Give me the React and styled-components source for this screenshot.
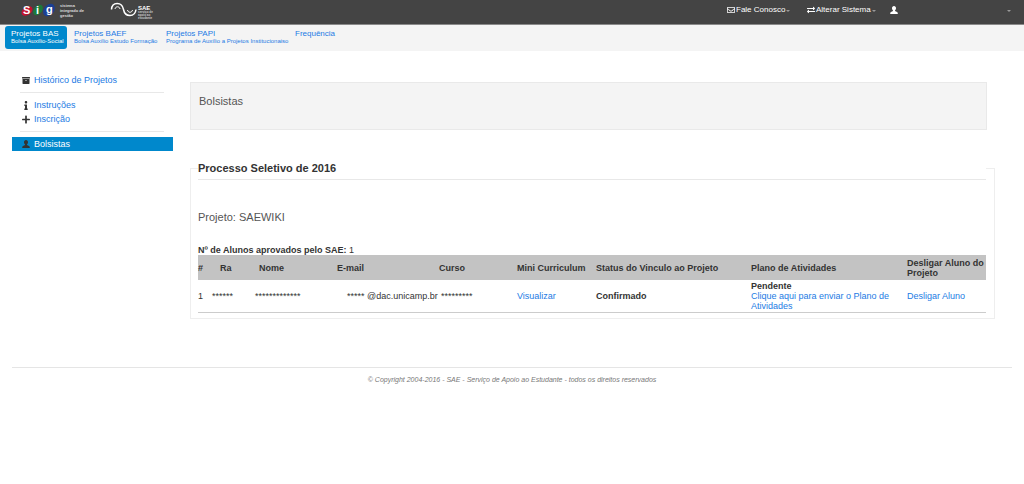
import React from 'react'
import styled, { createGlobalStyle } from 'styled-components'
import { FaArchive, FaInfo, FaPlus, FaRegEnvelope, FaExchangeAlt } from 'react-icons/fa'

const GlobalStyle = createGlobalStyle`
  * {
    box-sizing: border-box;
  }
  body {
    margin: 0;
    background: #fff;
    color: #333;
    font-family: "Liberation Sans", Arial, sans-serif;
    font-size: 9px;
    line-height: 10px;
  }
  a {
    color: #1c7be4;
    text-decoration: none;
  }
`

const TopBar = styled.header`
  display: flex;
  align-items: flex-start;
  justify-content: space-between;
  height: 25px;
  padding: 0 13px 0 20px;
  background: #444;
  border-bottom: 1px solid #8a8a8a;
`

const Logos = styled.div`
  display: flex;
  gap: 20px;
`

const TopMenu = styled.nav`
  display: flex;
  align-items: center;
  height: 20px;
`

const MenuButton = styled.button`
  display: flex;
  align-items: center;
  gap: 1px;
  width: ${(p) => p.$width};
  padding: 0;
  border: 0;
  background: none;
  color: #fff;
  font: inherit;
  font-size: 8px;
  white-space: nowrap;
`

const Caret = styled.span`
  margin-top: 2px;
  border-top: 2px solid #999;
  border-left: 2px solid transparent;
  border-right: 2px solid transparent;
`

const Spacer = styled.span`
  flex: 1;
`

const TabBar = styled.nav`
  display: flex;
  align-items: flex-start;
  height: 26px;
  padding: 1px 5px;
  background: #f4f4f4;
`

const Tab = styled.a`
  width: ${(p) => p.$width};
  height: 23px;
  margin-right: 1px;
  padding: 3px 0 0 6px;
  border-radius: 3px;
  background: ${(p) => (p.$active ? '#0088cc' : 'none')};
  color: ${(p) => (p.$active ? '#fff' : '#1c7be4')};
  font-size: 8px;
  white-space: nowrap;
`

const TabNote = styled.small`
  display: block;
  font-size: 6px;
  line-height: 5px;
`

const Page = styled.div`
  display: grid;
  grid-template-columns: 161px minmax(0, 1fr);
  column-gap: 17px;
  padding: 22px 29px 0 12px;
`

const SideMenu = styled.nav`
  display: flex;
  flex-direction: column;
`

const SideLink = styled.a`
  display: flex;
  align-items: center;
  gap: 4px;
  height: 14px;
  padding-left: 10px;
  background: ${(p) => (p.$active ? '#0088cc' : 'none')};
  color: ${(p) => (p.$active ? '#fff' : '#1c7be4')};

  svg {
    width: 8px;
    color: #333;
  }
`

const SideRule = styled.hr`
  width: 144px;
  margin: 5px 8px;
  border: 0;
  border-top: 1px solid #e8e8e8;
`

const Heading = styled.div`
  height: 48px;
  margin: 9px 8px 0 0;
  padding: 11px 8px;
  background: #f4f4f4;
  border: 1px solid #e9e9e9;

  h1 {
    margin: 0;
    font-size: 11px;
    font-weight: normal;
    line-height: 14px;
    color: #555;
  }
`

const Process = styled.fieldset`
  min-width: 0;
  margin: 31px 0 0;
  padding: 0 8px 5px 7px;
  border: 1px solid #eee;
`

const Legend = styled.legend`
  width: 100%;
  padding: 0;
  font-size: 11px;
  font-weight: bold;
  line-height: 14px;
`

const LegendRule = styled.hr`
  margin: 4px 0 30px;
  border: 0;
  border-top: 1px solid #e8e8e8;
`

const Project = styled.h2`
  margin: 0 0 21px;
  font-size: 11px;
  font-weight: normal;
  line-height: 14px;
  color: #555;
`

const Count = styled.p`
  margin: 0;
`

const Table = styled.table`
  width: 100%;
  border-collapse: collapse;
  table-layout: fixed;
  border-bottom: 1px solid #ccc;
`

const Th = styled.th`
  height: 25px;
  padding: 0 0 0 ${(p) => p.$indent || '0'};
  background: #c3c3c3;
  text-align: left;
`

const Td = styled.td`
  height: 32px;
  padding: 0 0 0 ${(p) => p.$indent || '0'};
  white-space: ${(p) => (p.$wrap ? 'normal' : 'nowrap')};
`

const Footer = styled.footer`
  margin: 48px 12px 0;
  padding-top: 7px;
  border-top: 1px solid #e5e5e5;
  color: #777;
  font-size: 7px;
  font-style: italic;
  text-align: center;
`

const UserIcon = () => (
  <svg width="8" height="8" viewBox="0 0 16 16" fill="currentColor" aria-hidden="true">
    <path d="M8 0C5.500 0 4 2 4 4.500C4 6.500 5 8 6 9V10L2 12C1 12.500 0.500 13 0.500 14V16H15.500V14C15.500 13 15 12.500 14 12L10 10V9C11 8 12 6.500 12 4.500C12 2 10.500 0 8 0Z" />
  </svg>
)

const SigLogo = () => (
  <svg width="70" height="20" viewBox="0 0 70 20" role="img" aria-label="Sig">
    <ellipse cx="7" cy="11" rx="6" ry="4" fill="#c4122f" transform="rotate(-35 7 11)" />
    <ellipse cx="18" cy="10" rx="6" ry="4" fill="#1c7a3b" transform="rotate(-50 18 10)" />
    <ellipse cx="29" cy="10" rx="7" ry="5" fill="#1b3f94" transform="rotate(-50 29 10)" />
    <g fill="#fff" fontWeight="bold" fontSize="11">
      <text x="3" y="14">S</text>
      <text x="16" y="14">i</text>
      <text x="26" y="13">g</text>
    </g>
    <g fill="#ddd" fontWeight="bold" fontSize="4">
      <text x="40" y="7">sistema</text>
      <text x="40" y="12">integrado de</text>
      <text x="40" y="17">gestão</text>
    </g>
  </svg>
)

const SaeLogo = () => (
  <svg width="44" height="20" viewBox="0 0 44 20" role="img" aria-label="SAE">
    <g fill="none" stroke="#fff">
      <path d="M1.500 9.500C2 1.500 12 1.500 13.500 9.500C15 17.500 25 17.500 26 9.500" strokeWidth="1.500" />
      <path d="M5 9C5.500 6 9.500 6 10 9M17.500 10C18 13 22 13 22.500 10" />
    </g>
    <g fill="#fff" fontWeight="bold">
      <text x="28" y="10" fontSize="6">SAE</text>
      <g fontSize="3" fill="#ccc">
        <text x="28" y="13">serviço de</text>
        <text x="28" y="16">apoio ao</text>
        <text x="28" y="19">estudante</text>
      </g>
    </g>
  </svg>
)

const columns = [
  { label: '#', width: '14px' },
  { label: 'Ra', width: '43px', indent: '8px' },
  { label: 'Nome', width: '82px', indent: '4px' },
  { label: 'E-mail', width: '102px' },
  { label: 'Curso', width: '78px' },
  { label: 'Mini Curriculum', width: '79px' },
  { label: 'Status do Vinculo ao Projeto', width: '155px' },
  { label: 'Plano de Atividades', width: '156px' },
  { label: 'Desligar Aluno do Projeto' },
]

const App = () => {
  return (
    <>
      <GlobalStyle />
      <TopBar>
        <Logos>
          <SigLogo />
          <SaeLogo />
        </Logos>
        <TopMenu>
          <MenuButton $width="80px"><FaRegEnvelope /> Fale Conosco <Caret /></MenuButton>
          <MenuButton $width="83px"><FaExchangeAlt /> Alterar Sistema <Caret /></MenuButton>
          <MenuButton $width="121px" aria-label="Usuário"><UserIcon /><Spacer /><Caret /></MenuButton>
        </TopMenu>
      </TopBar>
      <TabBar>
        <Tab href="#bas" $width="62px" $active>Projetos BAS<TabNote>Bolsa Auxílio-Social</TabNote></Tab>
        <Tab href="#baef" $width="91px">Projetos BAEF<TabNote>Bolsa Auxílio Estudo Formação</TabNote></Tab>
        <Tab href="#papi" $width="128px">Projetos PAPI<TabNote>Programa de Auxílio a Projetos Institucionaiso</TabNote></Tab>
        <Tab href="#frequencia" $width="62px">Frequência</Tab>
      </TabBar>
      <Page>
        <SideMenu>
          <SideLink href="#historico"><FaArchive /> Histórico de Projetos</SideLink>
          <SideRule />
          <SideLink href="#instrucoes"><FaInfo /> Instruções</SideLink>
          <SideLink href="#inscricao"><FaPlus /> Inscrição</SideLink>
          <SideRule />
          <SideLink href="#bolsistas" $active><UserIcon /> Bolsistas</SideLink>
        </SideMenu>
        <main>
          <Heading><h1>Bolsistas</h1></Heading>
          <Process>
            <Legend>Processo Seletivo de 2016</Legend>
            <LegendRule />
            <Project>Projeto: SAEWIKI</Project>
            <Count><b>Nº de Alunos aprovados pelo SAE:</b> 1</Count>
            <Table>
              <colgroup>
                {columns.map((c) => <col key={c.label} style={{ width: c.width }} />)}
              </colgroup>
              <thead>
                <tr>
                  {columns.map((c) => <Th key={c.label} scope="col" $indent={c.indent}>{c.label}</Th>)}
                </tr>
              </thead>
              <tbody>
                <tr>
                  <Td>1</Td>
                  <Td>******</Td>
                  <Td>*************</Td>
                  <Td $indent="10px">***** @dac.unicamp.br</Td>
                  <Td $indent="2px">*********</Td>
                  <Td><a href="#visualizar">Visualizar</a></Td>
                  <Td><b>Confirmado</b></Td>
                  <Td $wrap><b>Pendente</b><br /><a href="#plano">Clique aqui para enviar o Plano de Atividades</a></Td>
                  <Td><a href="#desligar">Desligar Aluno</a></Td>
                </tr>
              </tbody>
            </Table>
          </Process>
        </main>
      </Page>
      <Footer>© Copyright 2004-2016 - SAE - Serviço de Apoio ao Estudante - todos os direitos reservados</Footer>
    </>
  )
}

export default App
